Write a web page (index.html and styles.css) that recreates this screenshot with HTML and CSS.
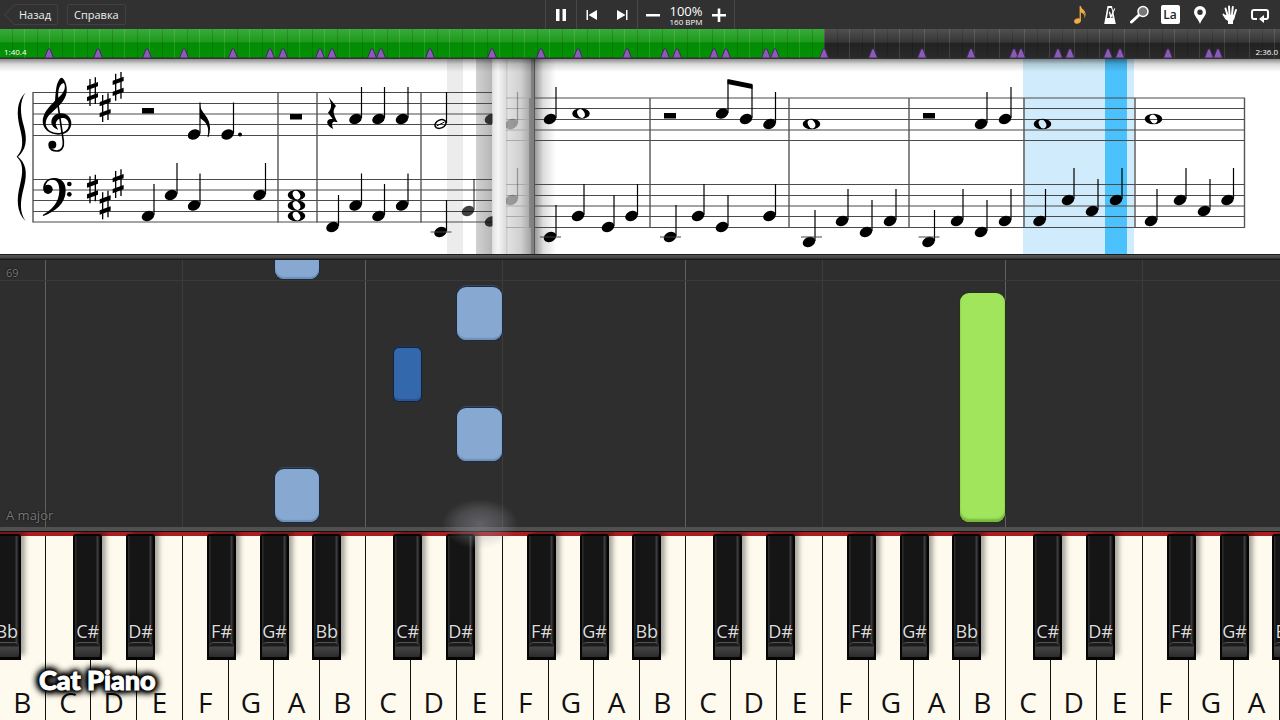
FILE: index.html
```html
<!DOCTYPE html>
<html lang="ru">
<head>
  <meta charset="UTF-8">
  <meta name="viewport" content="width=device-width, initial-scale=1">
  <title>Cat Piano</title>
  <link rel="stylesheet" href="styles.css">
</head>
<body>
  <header class="toolbar">
    <nav class="menu">
      <button class="menu-btn back">Назад</button>
      <button class="menu-btn">Справка</button>
    </nav>

    <div class="transport">
      <div class="group">
        <button class="icon-btn" aria-label="Пауза"><svg width="16" height="16" viewBox="0 0 16 16"><path d="M3 2h3.500v12H3zM9.500 2H13v12H9.500z"/></svg></button>
      </div>
      <div class="group">
        <button class="icon-btn" aria-label="В начало"><svg width="16" height="16" viewBox="0 0 16 16"><path d="M2.500 3H4v10H2.500zM4.500 8L13 3v10z"/></svg></button>
        <button class="icon-btn" aria-label="Вперёд"><svg width="16" height="16" viewBox="0 0 16 16"><path d="M12 3h1.500v10H12zM11.500 8L3 3v10z"/></svg></button>
      </div>
      <div class="group">
        <button class="icon-btn" aria-label="Медленнее"><svg width="16" height="16" viewBox="0 0 16 16"><path d="M1 7h14v2.500H1z"/></svg></button>
        <div class="tempo"><span class="percent">100%</span><span class="bpm">160 BPM</span></div>
        <button class="icon-btn" aria-label="Быстрее"><svg width="16" height="16" viewBox="0 0 16 16"><path d="M1 7h5.700V1.500h2.600V7H15v2.500H9.300V15H6.700V9.500H1z"/></svg></button>
      </div>
    </div>

    <div class="tools">
      <button class="icon-btn active" aria-label="Ноты"><svg width="20" height="20" viewBox="0 0 20 20"><ellipse cx="7.500" cy="16" rx="3.400" ry="2.600" transform="rotate(-20 7.500 16)"/><path d="M9.600 1h1.300c.2 2 1.800 3 3 4.300 2.400 2.600 1.900 6 .3 8 .6-2.300.5-4.200-3.300-5.800V16H9.600zM10.900 4c.5 2 4.700 3 3.900 7 1-3-.9-4.200-3.900-5.200z"/></svg></button>
      <button class="icon-btn" aria-label="Метроном"><svg width="20" height="20" viewBox="0 0 20 20"><path fill-rule="evenodd" d="M7.500 1h4.500l3.800 18H4.200zM8.700 3L7 13h3.200l-1.400-6 1.200-.4L11.400 11l1-4.500L11.200 3zM11 13h1.700l-.6-3z"/><path d="M14.300 3.200l1 .5-4.700 10-.9-.4z"/></svg></button>
      <button class="icon-btn" aria-label="Масштаб"><svg width="20" height="20" viewBox="0 0 20 20"><path d="M8.500 10.500L1.500 17" stroke="#fff" stroke-width="3" stroke-linecap="round"/><circle cx="13" cy="6.500" r="5" fill="#777" stroke="#fff" stroke-width="1.500"/></svg></button>
      <button class="icon-btn" aria-label="Названия нот"><span class="la">La</span></button>
      <button class="icon-btn" aria-label="Закладка"><svg width="20" height="20" viewBox="0 0 20 20"><path fill-rule="evenodd" d="M10 1a6 6 0 0 1 6 6c0 4-4 6.500-6 12C8 13.500 4 11 4 7a6 6 0 0 1 6-6zM10 4.500a2.700 2.700 0 1 0 0 5.400 2.700 2.700 0 0 0 0-5.400z"/></svg></button>
      <button class="icon-btn" aria-label="Руки"><svg width="20" height="20" viewBox="0 0 20 20"><g stroke="#fff" stroke-width="2" stroke-linecap="round"><path d="M7.500 10L5.500 3.500M9.500 9.500L9 1.500M12 9.500L12.800 2M14 11l2-6M6.500 14L3.500 9.500"/></g><path d="M6.500 9.500l8.500.500c0 3-.7 4.500-2 6V19H8v-3c-1.500-1-2.500-2.500-4-5.500z"/></svg></button>
      <button class="icon-btn" aria-label="Повтор"><svg width="20" height="20" viewBox="0 0 20 20"><path d="M7 14H4a2 2 0 0 1-2-2V7a2 2 0 0 1 2-2h12a2 2 0 0 1 2 2v5a2 2 0 0 1-2 2h-3" fill="none" stroke="#fff" stroke-width="2"/><path d="M14 10v8l-5-4z"/></svg></button>
    </div>
  </header>

  <div class="timeline">
    <div class="played" style="width: 64.4%"></div>
    <svg class="markers" viewBox="0 0 1280 30" aria-hidden="true">
      <defs><path id="mk" d="M-4.500 29L-1 20h2l3.500 9z"/></defs>
      <use href="#mk" x="49"/><use href="#mk" x="98"/><use href="#mk" x="147"/><use href="#mk" x="184"/><use href="#mk" x="233"/><use href="#mk" x="270"/><use href="#mk" x="283"/><use href="#mk" x="320"/><use href="#mk" x="332"/><use href="#mk" x="372"/><use href="#mk" x="381"/><use href="#mk" x="430"/><use href="#mk" x="492"/><use href="#mk" x="541"/><use href="#mk" x="578"/><use href="#mk" x="627"/><use href="#mk" x="665"/><use href="#mk" x="677"/><use href="#mk" x="714"/><use href="#mk" x="726"/><use href="#mk" x="766"/><use href="#mk" x="775"/><use href="#mk" x="824"/><use href="#mk" x="873"/><use href="#mk" x="922"/><use href="#mk" x="971"/><use href="#mk" x="1014"/><use href="#mk" x="1021"/><use href="#mk" x="1058"/><use href="#mk" x="1070"/><use href="#mk" x="1108"/><use href="#mk" x="1120"/><use href="#mk" x="1168"/><use href="#mk" x="1209"/><use href="#mk" x="1218"/>
    </svg>
    <div class="times"><span>1:40.4</span><span>2:36.0</span></div>
    <input class="seek" type="range" min="0" max="156" step="0.1" value="100.4" aria-label="Позиция">
  </div>

  <section class="sheet">
    <svg viewBox="0 59 1280 195" role="img" aria-label="Нотный лист">
      <defs>
        <ellipse id="head" rx="6.500" ry="4.900" transform="rotate(-25)"/>
        <g id="q"><use href="#head"/><path d="M6 -1V-32" stroke="#000" stroke-width="1.200"/></g>
        <path id="w" fill-rule="evenodd" d="M-8.800 0a8.800 5.300 0 1 0 17.600 0a8.800 5.300 0 1 0 -17.600 0zM-2.300 -4a4.600 3.400 60 1 0 4.600 8a4.600 3.400 60 1 0 -4.600 -8z"/>
        <path id="rest" d="M0 0h12v5.500H0z"/>
        <g id="sharp"><path d="M-7 -38V43M9 -43V37" stroke="#000" stroke-width="4"/><path d="M-16 -17L17 -29v13L-16 -4zM-16 16L17 4v13L-16 29z"/></g>
        <path id="ledger" d="M-10 0H11" stroke="#444" stroke-width="1"/>
        <linearGradient id="strip"><stop offset="0" stop-color="#d2d2d2"/><stop offset="1" stop-color="#b6b6b6"/></linearGradient>
        <linearGradient id="curl"><stop offset="0" stop-color="#e2e2e2"/><stop offset=".4" stop-color="#f6f6f6"/><stop offset="1" stop-color="#dcdcdc"/></linearGradient>
        <linearGradient id="fold"><stop offset="0" stop-color="#c8c8c8"/><stop offset=".1" stop-color="#e0e0e0"/><stop offset=".6" stop-color="#d0d0d0"/><stop offset="1" stop-color="#a2a2a2"/></linearGradient>
        <linearGradient id="shade"><stop offset="0" stop-color="#999"/><stop offset=".4" stop-color="#ddd"/><stop offset="1" stop-color="#fff"/></linearGradient>
        <linearGradient id="top" x2="0" y2="1"><stop offset="0" stop-color="#000" stop-opacity=".45"/><stop offset=".4" stop-color="#000" stop-opacity=".15"/><stop offset="1" stop-color="#000" stop-opacity="0"/></linearGradient>
        <clipPath id="left"><path d="M0 59H492.500V254H0z"/></clipPath>
        <clipPath id="right"><path d="M506 59H1280V254H506z"/></clipPath>
      </defs>

      <!-- page turn and current position -->
      <path d="M447 59h16v195h-16z" fill="#ececec"/>
      <path d="M476 59h16.500v195H476z" fill="url(#strip)"/>
      <path d="M492.500 59H506v195h-13.500z" fill="url(#curl)"/>
      <path d="M506 59h25v195h-25z" fill="url(#fold)"/>
      <path d="M535 59h21v195h-21z" fill="url(#shade)"/>
      <path d="M1023 59h111v195h-111z" fill="#d0ecfc"/>
      <path d="M1105 59h22v195h-22z" fill="#4cc2fd"/>

      <!-- staves -->
      <path d="M33 92.500H492M33 103.500H492M33 114H492M33 124.500H492M33 135.500H492M33 179.500H492M33 190H492M33 200.500H492M33 211.500H492M33 222H492" stroke="#4a4a4a" stroke-width="1.200"/>
      <path d="M33 92V222.500M278 92V222.500M317 92V222.500M421 92V222.500" stroke="#555" stroke-width="1.400"/>
      <path d="M535 98H1245M535 108.500H1245M535 119.500H1245M535 130H1245M535 140.500H1245M535 184.500H1245M535 195.500H1245M535 206H1245M535 216.500H1245M535 227.500H1245" stroke="#4a4a4a" stroke-width="1.200"/>
      <path d="M506 98h25M506 108.500h25M506 119.500h25M506 130h25M506 140.500h25M506 184.500h25M506 195.500h25M506 206h25M506 216.500h25M506 227.500h25" stroke="#aaa"/>
      <path d="M650 98V228M789 98V228M909 98V228M1024 98V228M1135 98V228M1244.500 98V228" stroke="#555" stroke-width="1.400"/>
      <path d="M531 59h4v195h-4z" fill="#808080"/>
      <path d="M534 59h1v195h-1z" fill="#555"/>
      <path d="M530 98V228" stroke="#666"/>

      <!-- brace, clefs and key signature -->
      <g transform="translate(0 60) scale(.3333)">
        <path d="M77 97C48 125 50 165 60 205C70 245 70 270 50 290C70 308 70 335 60 375C50 415 48 455 77 484C58 455 60 425 72 380C84 335 76 308 54 290C76 270 84 245 72 200C60 160 58 125 77 97z"/>
        <path fill-rule="evenodd" d="M186 53C197 60 202 80 200 97C196 124 172 142 158 155C142 168 135 182 138 196C142 212 158 220 178 219C198 218 208 205 206 190C204 179 196 173 187 174C174 175 165 186 168 196C170 203 174 206 174 209C162 205 154 196 154 186C155 170 168 160 183 160C202 160 214 174 214 190C213 210 200 224 175 224C148 224 128 206 128 184C129 158 146 142 165 122C166 116 167 80 173 68C177 58 182 52 186 53zM190 69C179 72 173 92 175 113C188 102 197 88 194 75C193 71 192 69 190 69z"/>
        <path d="M170 108L190 243C192 263 184 273 170 273C158 273 151 268 148 260" fill="none" stroke="#000" stroke-width="5"/>
        <circle cx="157" cy="254" r="12"/>
        <circle cx="144" cy="388" r="14"/>
        <path d="M130 388C128 366 144 353 164 354C186 355 198 370 197 393C196 432 165 455 130 468L128 465C155 450 177 428 178 392C178 372 172 359 157 359C145 359 137 368 136 382z"/>
        <circle cx="208" cy="372" r="7"/><circle cx="208" cy="403" r="7"/>
        <use href="#sharp" x="277" y="95"/><use href="#sharp" x="315" y="143"/><use href="#sharp" x="354" y="79"/>
        <use href="#sharp" x="277" y="387"/><use href="#sharp" x="315" y="435"/><use href="#sharp" x="354" y="371"/>
      </g>

      <!-- left page, treble -->
      <use href="#rest" x="142" y="108"/>
      <use href="#q" x="194" y="134.500"/>
      <path d="M200 103c0 11 10 12 10 25 0 3-.5 6-1.500 9h-1c2-9 0-14-7.500-19z"/>
      <use href="#q" x="227.500" y="134.500"/><circle cx="240" cy="134.500" r="2"/>
      <use href="#rest" x="290" y="114"/>
      <path transform="translate(310 60) scale(.3333)" d="M56 112L78 138C68 150 68 160 83 187C68 181 62 188 70 207C48 198 44 174 68 177L54 158C66 146 66 132 56 112z"/>
      <use href="#q" x="355.500" y="119"/><use href="#q" x="378.500" y="119"/><use href="#q" x="402" y="119"/>
      <ellipse cx="440.500" cy="124" rx="5.800" ry="4" transform="rotate(-25 440.500 124)" fill="none" stroke="#000" stroke-width="1.500"/>
      <path d="M436.500 126L444.500 122" stroke="#000" stroke-width="1"/>
      <path d="M446.500 123V92" stroke="#000" stroke-width="1.200"/>
      <!-- left page, bass -->
      <use href="#q" x="148" y="216"/><use href="#q" x="171" y="195"/><use href="#q" x="194" y="205.500"/><use href="#q" x="259.500" y="195"/>
      <use href="#w" x="296.500" y="195"/><use href="#w" x="296.500" y="205.500"/><use href="#w" x="296.500" y="216"/>
      <use href="#q" x="332.500" y="227"/><use href="#q" x="355.500" y="205.500"/><use href="#q" x="378.500" y="216"/><use href="#q" x="402" y="205.500"/>
      <use href="#q" x="440.500" y="232"/><use href="#ledger" x="440.500" y="232"/>
      <g clip-path="url(#left)" opacity=".75"><use href="#q" x="468" y="211"/><use href="#q" x="491" y="119"/><use href="#q" x="491" y="221.500"/></g>
      <g clip-path="url(#right)" opacity=".3"><use href="#q" x="511.500" y="124"/><use href="#q" x="511.500" y="200"/></g>

      <!-- right page, treble -->
      <use href="#q" x="550" y="119"/><use href="#w" x="581" y="113.500"/>
      <use href="#rest" x="664" y="113"/>
      <use href="#head" transform="translate(722 113.500)"/><use href="#head" transform="translate(746 119)"/>
      <path d="M728 113V80M752 118V85" stroke="#000" stroke-width="1.200"/><path d="M727.500 79L752.500 84v5L727.500 84z"/>
      <use href="#q" x="769.500" y="124"/>
      <use href="#w" x="811.500" y="124"/>
      <use href="#rest" x="923" y="113"/><use href="#q" x="981" y="124"/><use href="#q" x="1005" y="119"/>
      <use href="#w" x="1042.500" y="124"/>
      <use href="#w" x="1153.500" y="119"/>
      <!-- right page, bass -->
      <use href="#q" x="550" y="237"/><use href="#ledger" x="550" y="237"/><use href="#q" x="578" y="216"/><use href="#q" x="608" y="227"/><use href="#q" x="631.500" y="216"/>
      <use href="#q" x="670" y="237"/><use href="#ledger" x="670" y="237"/><use href="#q" x="698" y="216"/><use href="#q" x="722" y="227"/><use href="#q" x="769.500" y="216"/>
      <use href="#q" x="809" y="242"/><use href="#ledger" x="811" y="237"/><use href="#q" x="842" y="221"/><use href="#q" x="866" y="232"/><use href="#q" x="890" y="221"/>
      <use href="#q" x="928.500" y="242"/><use href="#ledger" x="928.500" y="237"/><use href="#q" x="957" y="221"/><use href="#q" x="981" y="232"/><use href="#q" x="1005" y="221"/>
      <use href="#q" x="1039.500" y="221"/><use href="#q" x="1068" y="200"/><use href="#q" x="1092" y="211"/><use href="#q" x="1116" y="200"/>
      <use href="#q" x="1151" y="221"/><use href="#q" x="1180" y="200"/><use href="#q" x="1204" y="211"/><use href="#q" x="1227.500" y="200"/>

      <path d="M0 59h1280v13H0z" fill="url(#top)"/>
    </svg>
  </section>

  <main class="roll">
    <div class="lanes"><i></i><i></i><i></i><i></i><i></i><i></i><i></i><i></i></div>
    <div class="measure">69</div>
    <div class="key-name">A major</div>
    <div class="note a n1"></div>
    <div class="note e n2"></div>
    <div class="note cs n3"></div>
    <div class="note e n4"></div>
    <div class="note a n5"></div>
    <div class="note b n6"></div>
  </main>

  <section class="keyboard">
    <div class="glow"></div>
    <div class="keys">
      <div class="cell"><button class="white">B</button><button class="black first">Bb</button></div>
      <div class="cell"><button class="white">C</button><button class="black on-c">C#</button></div>
      <div class="cell"><button class="white">D</button><button class="black on-d">D#</button></div>
      <div class="cell"><button class="white">E</button></div>
      <div class="cell"><button class="white">F</button><button class="black on-f">F#</button></div>
      <div class="cell"><button class="white">G</button><button class="black on-g">G#</button></div>
      <div class="cell"><button class="white">A</button><button class="black on-a">Bb</button></div>
      <div class="cell"><button class="white">B</button></div>
      <div class="cell"><button class="white">C</button><button class="black on-c">C#</button></div>
      <div class="cell"><button class="white">D</button><button class="black on-d">D#</button></div>
      <div class="cell"><button class="white">E</button></div>
      <div class="cell"><button class="white">F</button><button class="black on-f">F#</button></div>
      <div class="cell"><button class="white">G</button><button class="black on-g">G#</button></div>
      <div class="cell"><button class="white">A</button><button class="black on-a">Bb</button></div>
      <div class="cell"><button class="white">B</button></div>
      <div class="cell"><button class="white">C</button><button class="black on-c">C#</button></div>
      <div class="cell"><button class="white">D</button><button class="black on-d">D#</button></div>
      <div class="cell"><button class="white">E</button></div>
      <div class="cell"><button class="white">F</button><button class="black on-f">F#</button></div>
      <div class="cell"><button class="white">G</button><button class="black on-g">G#</button></div>
      <div class="cell"><button class="white">A</button><button class="black on-a">Bb</button></div>
      <div class="cell"><button class="white">B</button></div>
      <div class="cell"><button class="white">C</button><button class="black on-c">C#</button></div>
      <div class="cell"><button class="white">D</button><button class="black on-d">D#</button></div>
      <div class="cell"><button class="white">E</button></div>
      <div class="cell"><button class="white">F</button><button class="black on-f">F#</button></div>
      <div class="cell"><button class="white">G</button><button class="black on-g">G#</button></div>
      <div class="cell"><button class="white">A</button><button class="black on-a">Bb</button></div>
    </div>
    <div class="brand">Cat Piano</div>
  </section>
</body>
</html>
```
FILE: styles.css
```css
* {
  box-sizing: border-box;
}
body {
  margin: 0;
  min-height: 100vh;
  display: flex;
  flex-direction: column;
  overflow-x: hidden;
  background: #2e2e2e;
  color: #fff;
  font-family: "Open Sans", "Noto Sans", sans-serif;
}
button {
  margin: 0;
  padding: 0;
  border: none;
  background: none;
  color: inherit;
  font-family: inherit;
  cursor: pointer;
}

/* toolbar */
.toolbar {
  display: grid;
  grid-template-columns: 1fr auto 1fr;
  height: 29px;
  background: #313131;
}
.menu {
  display: flex;
  align-items: center;
  gap: 9px;
  padding-left: 13px;
}
.menu-btn {
  height: 21px;
  padding: 0 6px;
  border: 1px solid #414141;
  border-radius: 2px;
  font-size: 11px;
  line-height: 18px;
  color: #eee;
}
.back {
  position: relative;
  border-left: none;
}
.back::before {
  content: "";
  position: absolute;
  left: -6px;
  top: 2px;
  width: 14px;
  height: 14px;
  border-left: 1px solid #414141;
  border-bottom: 1px solid #414141;
  transform: rotate(45deg);
}
.transport, .group, .tools {
  display: flex;
  align-items: center;
}
.transport {
  border-left: 1px solid #484848;
}
.group {
  height: 100%;
  border-right: 1px solid #484848;
}
.icon-btn {
  width: 30px;
  height: 29px;
  display: flex;
  align-items: center;
  justify-content: center;
}
.icon-btn svg {
  fill: #fff;
}
.tempo {
  width: 36px;
  display: flex;
  flex-direction: column;
  align-items: center;
  white-space: nowrap;
}
.percent {
  font-size: 13px;
  line-height: 14px;
}
.bpm {
  font-size: 8px;
  line-height: 8px;
}
.tools {
  justify-content: flex-end;
  padding-right: 5px;
}
.tools .active svg {
  fill: #f0ab42;
}
.la {
  width: 19px;
  height: 19px;
  background: #fff;
  border-radius: 2px;
  color: #222;
  font-size: 12px;
  font-weight: 600;
  line-height: 20px;
}

/* timeline */
.timeline {
  position: relative;
  height: 30px;
  overflow: hidden;
  background: linear-gradient(#505050, #363636 45%, #222 50%, #2a2a2a);
  border-bottom: 1px solid #333;
}
.timeline::after {
  content: "";
  position: absolute;
  inset: 0;
  background: repeating-linear-gradient(90deg, transparent 0 12px, rgba(0, 0, 0, 0.15) 12px 13px, transparent 13px 24px, rgba(255, 255, 255, 0.12) 24px 25px);
}
.played {
  height: 100%;
  background: linear-gradient(#38aa38, #1f9a1f 45%, #048c04 50%, #049004);
  border-bottom: 1px solid #176017;
}
.markers {
  position: absolute;
  left: 0;
  top: 0;
  width: 100%;
  fill: #8a5cb5;
  stroke: #3f2c59;
  stroke-width: 1;
  z-index: 1;
}
.times {
  position: absolute;
  inset: auto 2px 0 4px;
  display: flex;
  justify-content: space-between;
  font-size: 8px;
  line-height: 12px;
  z-index: 1;
}
.seek {
  position: absolute;
  inset: 0;
  width: 100%;
  height: 100%;
  margin: 0;
  opacity: 0;
  z-index: 2;
  cursor: pointer;
}

/* sheet music */
.sheet {
  background: #fff;
}
.sheet svg {
  display: block;
  width: 100%;
}

/* falling notes */
.roll {
  position: relative;
  flex: 1;
  min-height: 273px;
  overflow: hidden;
  background: #2e2e2e;
}
.roll::before {
  content: "";
  position: absolute;
  inset: 0 0 auto;
  height: 6px;
  background: linear-gradient(#1c1c1c 0 1px, #555 1px, #454545 4px, #1c1c1c 5px);
  z-index: 2;
}
.lanes {
  position: absolute;
  inset: 0;
  display: grid;
  grid-template-columns: 1fr 3fr 4fr 3fr 4fr 3fr 4fr 3fr 3fr;
}
.lanes i {
  border-right: 1px solid #606060;
}
.lanes i:nth-child(even) {
  border-color: #3d3d3d;
}
.measure, .key-name {
  position: absolute;
  left: 0;
  padding: 0 6px;
  font-size: 12px;
  line-height: 16px;
  color: #777;
  text-shadow: 0 0 2px #000;
}
.measure {
  top: 0;
  width: 100%;
  height: 27px;
  padding-top: 11px;
  border-bottom: 1px solid #3a3a3a;
  font-size: 11px;
}
.key-name {
  bottom: 4px;
  font-size: 13px;
}
.note {
  position: absolute;
  width: 3.5%;
  height: 53px;
  border-radius: 9px;
  background: #87a9d1;
  box-shadow: 0 0 0 1px #1d2b40, 0 -2px 0 #34475f, inset 0 -2px 1px #6d8fb8;
}
.a {
  left: 21.45%;
}
.e {
  left: 35.7%;
}
.cs {
  left: 30.8%;
  width: 2.1%;
  border-radius: 5px;
  background: #3468ad;
  box-shadow: 0 0 0 1px #16233a, 0 -2px 0 #1f3454, inset 0 -2px 1px #285493;
}
.b {
  left: 75%;
  background: #a0e55c;
  box-shadow: 0 0 0 1px #26331a, inset 0 -3px 2px #79b840;
}
.n1 {
  top: -28px;
}
.n2 {
  top: 33px;
}
.n3 {
  top: 94px;
}
.n4 {
  top: 154px;
}
.n5 {
  top: 215px;
}
.n6 {
  top: 39px;
  height: 229px;
}

/* piano */
.keyboard {
  position: relative;
  height: 193px;
  border-top: 4px solid #505050;
}
.keys {
  height: 100%;
  display: grid;
  grid-template-columns: repeat(28, 1fr);
  overflow: hidden;
  border-top: 1px solid #111;
}
.keys::before {
  content: "";
  position: absolute;
  inset: 1px 0 auto;
  height: 4px;
  background: #a81e22;
}
.cell {
  position: relative;
  min-width: 0;
  padding-top: 4px;
}
.white {
  display: flex;
  align-items: flex-end;
  justify-content: center;
  width: 100%;
  height: 100%;
  border-right: 1px solid #111;
  background: #fefbee;
  color: #111;
  font-size: 28px;
  line-height: 36px;
}
.black {
  position: absolute;
  top: 2px;
  width: 29px;
  height: 126px;
  padding-bottom: 16px;
  display: flex;
  align-items: flex-end;
  justify-content: center;
  border: 2px solid #050505;
  border-bottom-width: 3px;
  border-radius: 3px 3px 0 0;
  background: linear-gradient(90deg, #2c2c2c 1px, #151515 2px 21px, #3c3c3c 22px 23px, #151515 24px);
  box-shadow: 5px -4px 5px -1px rgba(0, 0, 0, 0.35);
  color: #ddd;
  font-size: 18px;
  line-height: 20px;
  text-shadow: 0 0 2px #000;
  z-index: 1;
}
.black::after {
  content: "";
  position: absolute;
  left: 0;
  right: 0;
  bottom: 0;
  height: 14px;
  border-top: 1px solid #555;
  border-radius: 5px 5px 3px 3px;
  background: linear-gradient(#1c1c1c 0 3px, #444 4px, #2c2c2c);
}
.first {
  left: -17%;
}
.on-c {
  left: 60%;
}
.on-d {
  left: 76%;
}
.on-f {
  left: 53%;
}
.on-g {
  left: 69%;
}
.on-a {
  left: 83%;
}
.glow {
  position: absolute;
  left: 34.5%;
  top: -32px;
  width: 6%;
  height: 50px;
  background: radial-gradient(closest-side, rgba(160, 160, 170, 0.45), rgba(160, 160, 170, 0.25) 60%, transparent);
  z-index: 2;
}
.brand {
  position: absolute;
  left: 39px;
  bottom: 25px;
  font-family: Lato, sans-serif;
  font-size: 27px;
  font-weight: 900;
  line-height: 30px;
  color: #fff;
  -webkit-text-stroke: 1px #fff;
  text-shadow: 0 0 2px #000, 0 0 3px #000, 0 0 4px #000, 0 0 5px #000, 0 0 6px #000, 0 0 7px #000, 0 0 8px #000, 0 0 9px #000, 0 0 10px #000, 0 0 10px #000;
  z-index: 3;
}
```
